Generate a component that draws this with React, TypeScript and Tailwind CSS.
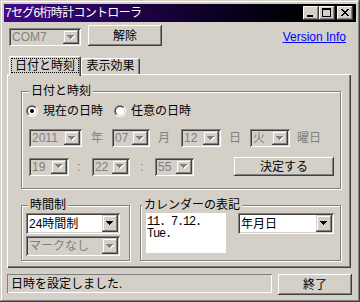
import type { ReactNode } from 'react';

const raised =
  'shadow-[inset_-1px_-1px_#404040,inset_1px_1px_#ffffff,inset_-2px_-2px_#808080]';
const sunken =
  'shadow-[inset_1px_1px_#808080,inset_-1px_-1px_#ffffff,inset_2px_2px_#404040,inset_-2px_-2px_#d4d0c8]';

function Btn({ className = '', children }: { className?: string; children: ReactNode }) {
  return (
    <div className={`flex items-center justify-center bg-[#d4d0c8] ${raised} ${className}`}>
      {children}
    </div>
  );
}

function Arrow({ disabled }: { disabled?: boolean }) {
  const rows = [
    [0, 0, 7],
    [1, 1, 5],
    [2, 2, 3],
    [3, 3, 1],
  ];
  return (
    <svg width="8" height="5" viewBox="0 0 8 5" shapeRendering="crispEdges">
      {disabled &&
        rows.map(([x, y, w]) => <rect key={`s${y}`} x={x + 1} y={y + 1} width={w} height={1} fill="#ffffff" />)}
      {rows.map(([x, y, w]) => (
        <rect key={y} x={x} y={y} width={w} height={1} fill={disabled ? '#808080' : '#000000'} />
      ))}
    </svg>
  );
}

function Combo({ className = '', value, disabled }: { className?: string; value: string; disabled?: boolean }) {
  return (
    <div
      className={`flex p-[2px] ${sunken} ${disabled ? 'bg-[#d4d0c8] text-[#808080]' : 'bg-white text-black'} ${className}`}
    >
      <div className="flex-1 flex items-center pl-[1px] overflow-hidden whitespace-nowrap">{value}</div>
      <div className="w-[16px] flex items-center justify-center bg-[#d4d0c8] shadow-[inset_-1px_-1px_#404040,inset_1px_1px_#d4d0c8,inset_-2px_-2px_#808080,inset_2px_2px_#ffffff]">
        <Arrow disabled={disabled} />
      </div>
    </div>
  );
}

function Radio({ id, checked }: { id: string; checked?: boolean }) {
  return (
    <svg width="12" height="12" viewBox="0 0 12 12" className="shrink-0">
      <defs>
        <linearGradient id={`${id}o`} x1="0" y1="0" x2="1" y2="1">
          <stop offset="0.5" stopColor="#808080" />
          <stop offset="0.5" stopColor="#ffffff" />
        </linearGradient>
        <linearGradient id={`${id}i`} x1="0" y1="0" x2="1" y2="1">
          <stop offset="0.5" stopColor="#404040" />
          <stop offset="0.5" stopColor="#d4d0c8" />
        </linearGradient>
      </defs>
      <circle cx="6" cy="6" r="6" fill={`url(#${id}o)`} />
      <circle cx="6" cy="6" r="5" fill={`url(#${id}i)`} />
      <circle cx="6" cy="6" r="4" fill="#ffffff" />
      {checked && <circle cx="6" cy="6" r="2" fill="#000000" />}
    </svg>
  );
}

function Group({ label, className = '', labelClass = '', children }: { label: string; className?: string; labelClass?: string; children: ReactNode }) {
  return (
    <div className={`relative border border-[#808080] shadow-[inset_1px_1px_#ffffff,1px_1px_#ffffff] ${className}`}>
      <span className={`absolute -top-[7px] px-[2px] bg-[#d4d0c8] ${labelClass}`}>{label}</span>
      {children}
    </div>
  );
}

function TitleBtn({ kind, className = '' }: { kind: 'min' | 'max' | 'close'; className?: string }) {
  return (
    <div className={`w-[16px] h-[14px] bg-[#d4d0c8] ${raised} ${className}`}>
      <svg width="16" height="14" viewBox="0 0 16 14" shapeRendering="crispEdges">
        {kind === 'min' && <rect x="4" y="9" width="6" height="2" fill="#000" />}
        {kind === 'max' && (
          <g fill="#000">
            <rect x="3" y="2" width="9" height="2" />
            <rect x="3" y="4" width="1" height="7" />
            <rect x="11" y="4" width="1" height="7" />
            <rect x="3" y="10" width="9" height="1" />
          </g>
        )}
        {kind === 'close' && (
          <g fill="#000">
            <rect x="4" y="3" width="2" height="1" />
            <rect x="10" y="3" width="2" height="1" />
            <rect x="5" y="4" width="2" height="1" />
            <rect x="9" y="4" width="2" height="1" />
            <rect x="6" y="5" width="4" height="1" />
            <rect x="7" y="6" width="2" height="1" />
            <rect x="6" y="7" width="4" height="1" />
            <rect x="5" y="8" width="2" height="1" />
            <rect x="9" y="8" width="2" height="1" />
            <rect x="4" y="9" width="2" height="1" />
            <rect x="10" y="9" width="2" height="1" />
          </g>
        )}
      </svg>
    </div>
  );
}

export default function App() {
  return (
    <div className="w-[360px] h-[302px] bg-[#d4d0c8] p-[4px] flex flex-col text-[12px] leading-none text-black font-['Liberation_Sans','Noto_Sans_CJK_JP',sans-serif] shadow-[inset_-1px_-1px_#404040,inset_1px_1px_#d4d0c8,inset_-2px_-2px_#808080,inset_2px_2px_#ffffff] select-none">
      {/* title bar */}
      <div className="h-[18px] flex items-center bg-linear-to-r from-[#420a8c] to-black pl-[1px] pr-[3px]">
        <span className="flex-1 text-white tracking-[-0.7px]">7セグ6桁時計コントローラ</span>
        <TitleBtn kind="min" />
        <TitleBtn kind="max" />
        <TitleBtn kind="close" className="ml-[2px]" />
      </div>

      {/* port row */}
      <div className="flex items-start mt-[3px] h-[21px] pl-[5px] pr-[10px]">
        <Combo className="w-[72px] h-[18px] mt-[3px]" value="COM7" disabled />
        <Btn className="ml-[7px] w-[74px] h-[21px]">解除</Btn>
        <span className="ml-auto mt-[6px] text-[#0000ff] underline">Version Info</span>
      </div>

      {/* tabs */}
      <div className="ml-[3px] mt-[10px] w-[344px] flex flex-col">
        <div className="relative z-10 flex items-end h-[18px] pl-[2px]">
          <div className="w-[72px] h-[20px] -mb-[2px] bg-[#d4d0c8] rounded-t-[2px] shadow-[inset_1px_1px_#ffffff,inset_-1px_0_#404040,inset_-2px_0_#808080] flex items-start justify-center pt-[2px]">
            <span className="w-[68px] h-[15px] border border-dotted border-black flex items-center justify-center">日付と時刻</span>
          </div>
          <div className="w-[59px] h-[16px] bg-[#d4d0c8] rounded-t-[2px] shadow-[inset_1px_1px_#ffffff,inset_-1px_0_#404040,inset_-2px_0_#808080] flex items-center justify-center">
            表示効果
          </div>
        </div>

        <div className="h-[194px] pl-[14px] pt-[17px] shadow-[inset_1px_1px_#ffffff,inset_-1px_-1px_#404040,inset_-2px_-2px_#808080]">
          <Group label="日付と時刻" className="w-[320px] h-[98px]" labelClass="left-[7px]">
            <div className="flex items-center h-[13px] mt-[12px] pl-[4px]">
              <div className="w-[88px] flex items-center gap-[5px]">
                <Radio id="r1" checked />
                <span>現在の日時</span>
              </div>
              <div className="flex items-center gap-[5px]">
                <Radio id="r2" />
                <span>任意の日時</span>
              </div>
            </div>

            <div className="flex items-center h-[18px] mt-[12px] pl-[7px] text-[#808080]">
              <Combo className="w-[53px] h-[18px]" value="2011" disabled />
              <span className="ml-[9px] w-[12px]">年</span>
              <Combo className="ml-[9px] w-[38px] h-[18px]" value="07" disabled />
              <span className="ml-[8px] w-[12px]">月</span>
              <Combo className="ml-[11px] w-[40px] h-[18px]" value="12" disabled />
              <span className="ml-[8px] w-[12px]">日</span>
              <Combo className="ml-[9px] w-[40px] h-[18px]" value="火" disabled />
              <span className="ml-[7px]">曜日</span>
            </div>

            <div className="flex items-center h-[19px] mt-[10px] pl-[7px] pr-[6px] text-[#808080]">
              <Combo className="w-[40px] h-[18px]" value="19" disabled />
              <span className="ml-[8px] w-[4px] text-center">:</span>
              <Combo className="ml-[11px] w-[38px] h-[18px]" value="22" disabled />
              <span className="ml-[10px] w-[4px] text-center">:</span>
              <Combo className="ml-[11px] w-[39px] h-[18px]" value="55" disabled />
              <Btn className="ml-auto w-[100px] h-[19px] text-black">決定する</Btn>
            </div>
          </Group>

          <div className="flex mt-[16px]">
            <Group label="時間制" className="w-[109px] h-[56px]" labelClass="left-[6px]">
              <div className="flex flex-col gap-[2px] pl-[4px] pt-[7px]">
                <Combo className="w-[94px] h-[21px]" value="24時間制" />
                <Combo className="w-[94px] h-[20px]" value="マークなし" disabled />
              </div>
            </Group>
            <Group label="カレンダーの表記" className="ml-[10px] w-[201px] h-[56px]" labelClass="left-[1px]">
              <div className="flex items-start pl-[5px] pt-[7px]">
                <div className="w-[80px] h-[40px] bg-white pl-[1px] pt-[3px] font-['Liberation_Mono',monospace] tracking-[-1.2px] leading-[12px] whitespace-pre">
                  {'11. 7.12.\nTue.'}
                </div>
                <Combo className="ml-[12px] w-[96px] h-[21px]" value="年月日" />
              </div>
            </Group>
          </div>
        </div>
      </div>

      {/* status row */}
      <div className="flex items-start mt-[6px] pl-[3px]">
        <div className="w-[265px] h-[19px] flex items-center pl-[4px] shadow-[inset_1px_1px_#808080,inset_-1px_-1px_#ffffff]">
          日時を設定しました.
        </div>
        <Btn className="ml-[6px] w-[74px] h-[21px]">終了</Btn>
      </div>
    </div>
  );
}
